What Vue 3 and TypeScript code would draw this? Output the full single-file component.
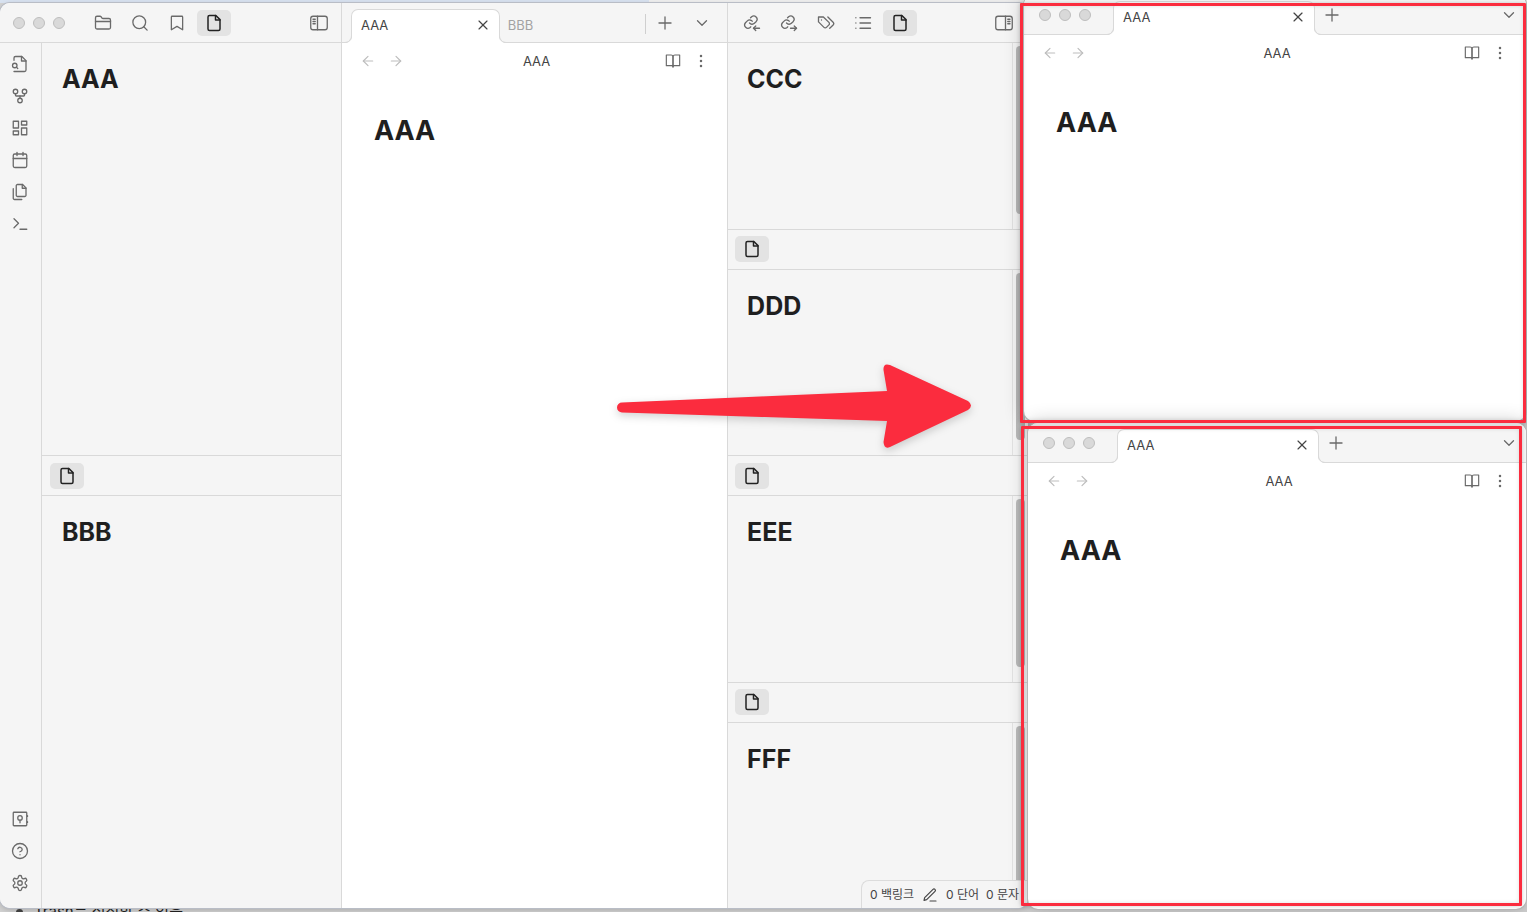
<script setup lang="ts">
import { h, ref } from 'vue'

const icons: Record<string, string[]> = {
  folder: [
    'M20 20a2 2 0 0 0 2-2V8a2 2 0 0 0-2-2h-7.9a2 2 0 0 1-1.69-.9L9.6 3.9A2 2 0 0 0 7.93 3H4a2 2 0 0 0-2 2v13a2 2 0 0 0 2 2Z',
    'M2 10h20',
  ],
  search: ['M19.5 11a8.5 8.5 0 1 1-17 0 8.5 8.5 0 0 1 17 0Z', 'M21.5 21.5 17 17'],
  bookmark: ['m19.5 21-7.5-4.5L4.500 21V4a1 1 0 0 1 1-1h13a1 1 0 0 1 1 1v17z'],
  file: ['M14.5 2H6a2 2 0 0 0-2 2v16a2 2 0 0 0 2 2h12a2 2 0 0 0 2-2V7.500L14.500 2z', 'M14 2v6h6'],
  panelLeft: ['M4 3h16a3 3 0 0 1 3 3v12a3 3 0 0 1-3 3H4a3 3 0 0 1-3-3V6a3 3 0 0 1 3-3Z', 'M10 3v18', 'M4 7h3M4 10h3M4 13h3'],
  panelRight: ['M4 3h16a3 3 0 0 1 3 3v12a3 3 0 0 1-3 3H4a3 3 0 0 1-3-3V6a3 3 0 0 1 3-3Z', 'M14 3v18', 'M17 7h3M17 10h3M17 13h3'],
  fileSearch: [
    'M4 22h14a2 2 0 0 0 2-2V7.500L14.500 2H6a2 2 0 0 0-2 2v3',
    'M14 2v6h6',
    'M5 17a3 3 0 1 0 0-6 3 3 0 0 0 0 6z',
    'm9 18-1.500-1.500',
  ],
  fork: [
    'M15 18a3 3 0 1 1-6 0 3 3 0 0 1 6 0Z',
    'M9 6a3 3 0 1 1-6 0 3 3 0 0 1 6 0Z',
    'M21 6a3 3 0 1 1-6 0 3 3 0 0 1 6 0Z',
    'M18 9v2c0 .6-.4 1-1 1H7c-.6 0-1-.4-1-1V9',
    'M12 12v3',
  ],
  dashboard: ['M3 3h7v9H3z', 'M14 3h7v5h-7z', 'M14 12h7v9h-7z', 'M3 16h7v5H3z'],
  calendar: ['M5 4h14a2 2 0 0 1 2 2v14a2 2 0 0 1-2 2H5a2 2 0 0 1-2-2V6a2 2 0 0 1 2-2Z', 'M16 2v4', 'M8 2v4', 'M3 10h18'],
  files: [
    'M15.500 2H8.600c-.4 0-.8.2-1.100.5-.3.3-.5.7-.5 1.100v12.800c0 .4.2.8.5 1.100.3.3.7.5 1.100.5h9.800c.4 0 .8-.2 1.100-.5.3-.3.5-.7.5-1.100V6.500L15.500 2z',
    'M3 7.600v12.800c0 .4.2.8.5 1.100.3.3.7.5 1.100.5h9.800',
    'M15 2v5h5',
  ],
  terminal: ['m4 17 6-6-6-6', 'M12 19h9'],
  vault: [
    'M4 3h16a1 1 0 0 1 1 1v16a1 1 0 0 1-1 1H4a1 1 0 0 1-1-1V4a1 1 0 0 1 1-1Z',
    'M15 10.500a3 3 0 1 1-6 0 3 3 0 0 1 6 0Z',
    'M12 13.500V17',
    'M22 7.500v1M22 15.500v1',
  ],
  help: ['M22 12a10 10 0 1 1-20 0 10 10 0 0 1 20 0Z', 'M9.090 9a3 3 0 0 1 5.830 1c0 2-3 3-3 3', 'M12 17h.01'],
  settings: [
    'M12.220 2h-.44a2 2 0 0 0-2 2v.18a2 2 0 0 1-1 1.730l-.43.25a2 2 0 0 1-2 0l-.15-.08a2 2 0 0 0-2.730.73l-.22.38a2 2 0 0 0 .73 2.730l.15.1a2 2 0 0 1 1 1.720v.51a2 2 0 0 1-1 1.740l-.15.09a2 2 0 0 0-.73 2.730l.22.38a2 2 0 0 0 2.730.73l.15-.08a2 2 0 0 1 2 0l.43.25a2 2 0 0 1 1 1.730V20a2 2 0 0 0 2 2h.44a2 2 0 0 0 2-2v-.18a2 2 0 0 1 1-1.730l.43-.25a2 2 0 0 1 2 0l.15.08a2 2 0 0 0 2.730-.73l.22-.39a2 2 0 0 0-.73-2.730l-.15-.08a2 2 0 0 1-1-1.740v-.5a2 2 0 0 1 1-1.740l.15-.09a2 2 0 0 0 .73-2.730l-.22-.38a2 2 0 0 0-2.730-.73l-.15.08a2 2 0 0 1-2 0l-.43-.25a2 2 0 0 1-1-1.730V4a2 2 0 0 0-2-2z',
    'M15 12a3 3 0 1 1-6 0 3 3 0 0 1 6 0Z',
  ],
  linkIn: [
    'M8.700 12a4.400 4.400 0 0 0 6.500.4l2.500-2.500a4.400 4.400 0 0 0-6.200-6.200l-1.400 1.400',
    'M12.300 9.600a4.400 4.400 0 0 0-6.500-.4l-2.500 2.500a4.400 4.400 0 0 0 6.200 6.200l.8-.8',
    'M22 19h-8',
    'm17 16-3 3 3 3',
  ],
  linkOut: [
    'M8.700 12a4.400 4.400 0 0 0 6.500.4l2.500-2.500a4.400 4.400 0 0 0-6.200-6.200l-1.400 1.400',
    'M12.300 9.600a4.400 4.400 0 0 0-6.500-.4l-2.500 2.500a4.400 4.400 0 0 0 6.200 6.200l.8-.8',
    'M14 19h8',
    'm19 16 3 3-3 3',
  ],
  tags: [
    'M8.500 4H2v6.500l7.300 7.300c.9.9 2.400.9 3.300 0l3.300-3.300c.9-.9.9-2.400 0-3.300L8.500 4Z',
    'M6 8v.01',
    'm14.500 4 7 7a2.600 2.600 0 0 1 0 3.600L17 19',
  ],
  list: ['M8 5h14', 'M8 12h14', 'M8 19h14', 'M2.500 5h.01', 'M2.500 12h.01', 'M2.500 19h.01'],
  close: ['M18 6 6 18', 'm6 6 12 12'],
  plus: ['M12 4v16', 'M4 12h16'],
  chevron: ['m6 9 6 6 6-6'],
  back: ['m12 19-7-7 7-7', 'M19 12H5'],
  forward: ['M5 12h14', 'm12 5 7 7-7 7'],
  book: ['M2 3h7a3 3 0 0 1 3 3v15a2 2 0 0 0-2-2H2z', 'M22 3h-7a3 3 0 0 0-3 3v15a2 2 0 0 1 2-2h8z'],
  more: [
    'M13 12a1 1 0 1 1-2 0 1 1 0 0 1 2 0Z',
    'M13 4.500a1 1 0 1 1-2 0 1 1 0 0 1 2 0Z',
    'M13 19.500a1 1 0 1 1-2 0 1 1 0 0 1 2 0Z',
  ],
  pen: ['M12 21h9', 'M16.500 3.500a2.120 2.120 0 0 1 3 3L7 19l-4 1 1-4Z'],
}

const Icon = (props: { name: string }) =>
  h('svg', { class: 'icon', viewBox: '0 0 24 24', 'aria-hidden': 'true' }, icons[props.name].map((d) => h('path', { d })))
Icon.props = ['name']

interface Action {
  icon: string
  label: string
}

const leftActions: Action[] = [
  { icon: 'folder', label: 'Files' },
  { icon: 'search', label: 'Search' },
  { icon: 'bookmark', label: 'Bookmarks' },
  { icon: 'file', label: 'AAA' },
]
const rightActions: Action[] = [
  { icon: 'linkIn', label: 'Backlinks' },
  { icon: 'linkOut', label: 'Outgoing links' },
  { icon: 'tags', label: 'Tags' },
  { icon: 'list', label: 'Outline' },
  { icon: 'file', label: 'CCC' },
]
const ribbonTop: Action[] = [
  { icon: 'fileSearch', label: 'Quick switcher' },
  { icon: 'fork', label: 'Graph view' },
  { icon: 'dashboard', label: 'Canvas' },
  { icon: 'calendar', label: 'Daily note' },
  { icon: 'files', label: 'Templates' },
  { icon: 'terminal', label: 'Command palette' },
]
const ribbonBottom: Action[] = [
  { icon: 'vault', label: 'Open vault' },
  { icon: 'help', label: 'Help' },
  { icon: 'settings', label: 'Settings' },
]

const leftPanes = ref<string[]>(['AAA', 'BBB'])
const rightPanes = ref<string[]>(['CCC', 'DDD', 'EEE', 'FFF'])
const popouts = [
  { id: 'upper', title: 'AAA' },
  { id: 'lower', title: 'AAA' },
]
const controls = ['Close', 'Minimize', 'Zoom']
</script>

<template>
  <div class="desktop">
    <div class="backdrop-top"><span class="backdrop-blue"></span></div>
    <p class="backdrop-note"><span class="bullet"></span>Trash는 설정할 수 있음</p>

    <main class="window main-window">
      <section class="dock dock-left">
        <nav class="ribbon">
          <div class="ribbon-head">
            <div class="lights">
              <button v-for="c in controls" :key="c" class="light" :aria-label="c"></button>
            </div>
          </div>
          <div class="ribbon-body">
            <button v-for="a in ribbonTop" :key="a.icon" class="ribbon-button" :aria-label="a.label">
              <Icon :name="a.icon" />
            </button>
            <span class="spacer"></span>
            <button v-for="a in ribbonBottom" :key="a.icon" class="ribbon-button" :aria-label="a.label">
              <Icon :name="a.icon" />
            </button>
          </div>
        </nav>
        <div class="panes">
          <article v-for="(pane, i) in leftPanes" :key="pane" class="pane">
            <header class="pane-head" :class="{ 'with-lights': i === 0 }">
              <template v-if="i === 0">
                <button
                  v-for="a in leftActions"
                  :key="a.icon"
                  class="dock-tab"
                  :class="{ active: a.icon === 'file' }"
                  :aria-label="a.label"
                >
                  <Icon :name="a.icon" />
                </button>
                <span class="spacer"></span>
                <button class="toggle" aria-label="Collapse left sidebar"><Icon name="panelLeft" /></button>
              </template>
              <button v-else class="dock-tab active" :aria-label="pane"><Icon name="file" /></button>
            </header>
            <div class="pane-body">
              <h2>{{ pane }}</h2>
            </div>
          </article>
        </div>
      </section>

      <section class="editor">
        <header class="tab-bar">
          <div class="tab active">
            <button class="tab-name">AAA</button>
            <button class="tab-close" aria-label="Close tab"><Icon name="close" /></button>
          </div>
          <div class="tab idle"><button class="tab-name">BBB</button></div>
          <button class="bar-button" aria-label="New tab"><Icon name="plus" /></button>
          <button class="bar-button" aria-label="Tab list"><Icon name="chevron" /></button>
        </header>
        <div class="view-head">
          <button class="view-button faint" aria-label="Back"><Icon name="back" /></button>
          <button class="view-button faint" aria-label="Forward"><Icon name="forward" /></button>
          <span class="view-title">AAA</span>
          <button class="view-button" aria-label="Reading view"><Icon name="book" /></button>
          <button class="view-button" aria-label="More options"><Icon name="more" /></button>
        </div>
        <h1>AAA</h1>
      </section>

      <section class="dock dock-right">
        <div class="panes">
          <article v-for="(pane, i) in rightPanes" :key="pane" class="pane">
            <header class="pane-head">
              <template v-if="i === 0">
                <button
                  v-for="a in rightActions"
                  :key="a.icon"
                  class="dock-tab"
                  :class="{ active: a.icon === 'file' }"
                  :aria-label="a.label"
                >
                  <Icon :name="a.icon" />
                </button>
                <span class="spacer"></span>
                <button class="toggle" aria-label="Collapse right sidebar"><Icon name="panelRight" /></button>
              </template>
              <button v-else class="dock-tab active" :aria-label="pane"><Icon name="file" /></button>
            </header>
            <div class="pane-body">
              <h2>{{ pane }}</h2>
              <div class="scroll-track"><div class="scroll-thumb"></div></div>
            </div>
          </article>
        </div>
      </section>

      <footer class="status-bar">
        <span>0 백링크</span>
        <button class="status-edit" aria-label="Editing view"><Icon name="pen" /></button>
        <span>0 단어</span>
        <span>0 문자</span>
      </footer>
    </main>

    <section v-for="p in popouts" :key="p.id" class="window popout" :class="p.id">
      <header class="tab-bar">
        <div class="lights">
          <button v-for="c in controls" :key="c" class="light" :aria-label="c"></button>
        </div>
        <div class="tab active">
          <button class="tab-name">{{ p.title }}</button>
          <button class="tab-close" aria-label="Close tab"><Icon name="close" /></button>
        </div>
        <button class="bar-button" aria-label="New tab"><Icon name="plus" /></button>
        <span class="spacer"></span>
        <button class="bar-button" aria-label="Tab list"><Icon name="chevron" /></button>
      </header>
      <div class="view-head">
        <button class="view-button faint" aria-label="Back"><Icon name="back" /></button>
        <button class="view-button faint" aria-label="Forward"><Icon name="forward" /></button>
        <span class="view-title">{{ p.title }}</span>
        <button class="view-button" aria-label="Reading view"><Icon name="book" /></button>
        <button class="view-button" aria-label="More options"><Icon name="more" /></button>
      </div>
      <h1>{{ p.title }}</h1>
    </section>

    <div class="frame frame-upper"></div>
    <div class="frame frame-lower"></div>
    <svg class="arrow" viewBox="610 356 370 104" aria-hidden="true">
      <path
        d="M622 402.500 887 391 883.500 370Q883 362.500 890 365L968 401Q974 405.500 968 410L890 447Q884 449.500 883.500 442L887 421 622 412.500A5 5 0 0 1 622 402.500Z"
      />
    </svg>
  </div>
</template>

<style>
html,
body,
#app {
  height: 100%;
}
body {
  margin: 0;
  overflow: hidden;
}
</style>

<style scoped>
.desktop {
  position: relative;
  height: 100%;
  overflow: hidden;
  background: #d2d2d2;
  color: #222;
  font: 13px/18px Inter, 'Noto Sans CJK KR', sans-serif;
}
.desktop * {
  box-sizing: border-box;
}
button {
  display: flex;
  align-items: center;
  justify-content: center;
  flex: none;
  margin: 0;
  padding: 0;
  border: 0;
  background: none;
  color: #6a6a6a;
  font: inherit;
}
.icon {
  flex: none;
  width: 18px;
  height: 18px;
  fill: none;
  stroke: currentColor;
  stroke-width: 1.75;
  stroke-linecap: round;
  stroke-linejoin: round;
}
.spacer {
  flex: 1;
}
h1,
h2 {
  margin: 0;
  color: #1f1f1f;
  font-weight: 700;
}
h1 {
  padding: 32px 32px 0;
  font-size: 27px;
  line-height: 40px;
}
h2 {
  flex: 1;
  padding: 20px 20px 0;
  font-size: 25px;
  line-height: 32px;
}

.backdrop-top {
  height: 3px;
  background: #efefef;
}
.backdrop-blue {
  display: block;
  width: 42.5%;
  height: 3px;
  background: #d8e2f0;
}
.backdrop-note {
  position: absolute;
  bottom: -10px;
  left: 16px;
  display: flex;
  align-items: center;
  gap: 11px;
  margin: 0;
  font-size: 15px;
  line-height: 20px;
}
.bullet {
  width: 7px;
  height: 7px;
  border-radius: 50%;
  background: #444;
}

.window {
  position: absolute;
  overflow: hidden;
  background: #fff;
}
.main-window {
  top: 3px;
  bottom: 4px;
  left: 0;
  display: flex;
  width: calc(67% + 5px);
  border-radius: 10px;
  box-shadow: 0 0 0 1px #b9bdc6, 0 2px 6px rgba(0, 0, 0, 0.2);
}
.popout {
  right: 1px;
  border-radius: 10px;
  box-shadow: 0 0 0 1px #b8b8b8, 0 0 20px rgba(0, 0, 0, 0.24);
}
.upper {
  top: -5px;
  bottom: calc(50% + 35px);
  left: calc(67% + 1px);
}
.lower {
  top: calc(50% - 33px);
  bottom: 3px;
  left: calc(67% + 5px);
}

.dock {
  display: flex;
  flex: none;
  background: #f5f5f5;
}
.dock-left {
  width: 342px;
  border-right: 1px solid #d9d9d9;
}
.dock-right {
  width: 301px;
  border-left: 1px solid #d9d9d9;
}
.ribbon {
  display: flex;
  flex-direction: column;
  width: 42px;
}
.ribbon-head {
  display: flex;
  flex: none;
  height: 40px;
  border-bottom: 1px solid #d9d9d9;
}
.ribbon-body {
  display: flex;
  flex: 1;
  flex-direction: column;
  align-items: center;
  gap: 4px;
  padding: 7px 2px 11px 0;
  border-right: 1px solid #d9d9d9;
}
.ribbon-button {
  width: 28px;
  height: 28px;
}
.lights {
  display: flex;
  flex: none;
  align-items: center;
  gap: 8px;
  padding-left: 13px;
}
.light {
  width: 12px;
  height: 12px;
  border: 1px solid #bebebe;
  border-radius: 50%;
  background: #d9d9d9;
}
.panes {
  display: flex;
  flex: 1;
  flex-direction: column;
  min-width: 0;
}
.pane {
  display: flex;
  flex: 1;
  flex-direction: column;
  min-height: 0;
  border-bottom: 1px solid #d9d9d9;
}
.pane:last-child {
  border-bottom: 0;
}
.pane-head {
  display: flex;
  flex: none;
  align-items: center;
  gap: 3px;
  height: 40px;
  padding: 0 15px 0 7px;
  border-bottom: 1px solid #d9d9d9;
}
.dock-left .pane-head {
  padding: 0 13px 0 8px;
}
.dock-left .with-lights {
  padding-left: 44px;
}
.dock-tab {
  width: 34px;
  height: 26px;
  border-radius: 5px;
}
.dock-tab.active {
  background: #e3e3e3;
  color: #222;
}
.dock-tab.active .icon {
  stroke-width: 2;
}
.pane-body {
  display: flex;
  flex: 1;
  min-height: 0;
}
.dock-right .pane-body h2 {
  padding-left: 19px;
}
.scroll-track {
  width: 16px;
  padding: 3px 3px 0;
  border-left: 1px solid #e2e2e2;
}
.scroll-thumb {
  height: 92%;
  border-radius: 4px;
  background: #b9b9b9;
}

.editor {
  flex: 1;
  min-width: 0;
}
.tab-bar {
  display: flex;
  align-items: center;
  height: 40px;
  border-bottom: 1px solid #d9d9d9;
  background: #f5f5f5;
}
.editor .tab-bar {
  padding: 0 7px 0 9px;
}
.tab {
  position: relative;
  display: flex;
  align-items: center;
  align-self: flex-end;
  justify-content: space-between;
  height: 33px;
  padding-bottom: 2px;
}
.tab.active {
  height: 34px;
  margin-bottom: -1px;
  padding: 0 7px 3px 9px;
  border: 1px solid #d9d9d9;
  border-bottom: 0;
  border-radius: 7px 7px 0 0;
  background: #fff;
}
.tab.active::before,
.tab.active::after {
  position: absolute;
  bottom: 0;
  width: 7px;
  height: 7px;
  border: solid #d9d9d9;
  content: '';
}
.tab.active::before {
  right: 100%;
  border-width: 0 1px 1px 0;
  border-radius: 0 0 7px 0;
  box-shadow: 3px 3px 0 #fff;
  clip-path: inset(0 -1px 0 0);
}
.tab.active::after {
  left: 100%;
  border-width: 0 0 1px 1px;
  border-radius: 0 0 0 7px;
  box-shadow: -3px 3px 0 #fff;
  clip-path: inset(0 0 0 -1px);
}
.editor .tab {
  flex: 1 1 50%;
}
.tab.idle {
  padding-left: 8px;
}
.tab.idle::after {
  position: absolute;
  top: 5px;
  right: 0;
  width: 1px;
  height: 20px;
  background: #cfcfcf;
  content: '';
}
.tab-name {
  color: #444;
}
.idle .tab-name {
  color: #a3a3a3;
}
.tab-close {
  width: 18px;
  height: 18px;
  color: #444;
}
.tab-close .icon,
.view-button .icon {
  width: 16px;
  height: 16px;
}
.bar-button {
  width: 37px;
  height: 28px;
}
.popout .tab-bar .lights {
  width: 89px;
  padding-left: 15px;
}
.popout .tab {
  width: 202px;
}
.popout .bar-button {
  width: 34px;
}
.view-head {
  display: flex;
  align-items: center;
  height: 36px;
  padding: 0 12px;
}
.view-button {
  width: 28px;
  height: 26px;
}
.view-button.faint {
  color: #bdbdbd;
}
.view-title {
  flex: 1;
  padding-left: 4px;
  color: #444;
  text-align: center;
}

.status-bar {
  position: absolute;
  right: 0;
  bottom: 0;
  display: flex;
  align-items: center;
  gap: 7px;
  height: 28px;
  padding: 0 9px 0 8px;
  border: 1px solid #dcdcdc;
  border-width: 1px 0 0 1px;
  border-radius: 8px 0 0 0;
  background: #f5f5f5;
  color: #444;
  font-size: 12px;
}
.status-edit {
  width: 18px;
  height: 18px;
  color: #444;
}
.status-edit .icon {
  width: 16px;
  height: 16px;
}

.frame {
  position: absolute;
  border: 3px solid #fb2c3e;
  border-radius: 1px;
  box-shadow: 0 0 4px rgba(0, 0, 0, 0.2), inset 0 0 4px rgba(0, 0, 0, 0.12);
  pointer-events: none;
}
.frame-upper {
  top: 3px;
  right: 1px;
  bottom: calc(50% + 33px);
  left: calc(67% - 3px);
}
.frame-lower {
  top: calc(50% - 30px);
  right: 5px;
  bottom: 6px;
  left: calc(67% - 2px);
}
.arrow {
  position: absolute;
  top: 356px;
  right: 547px;
  width: 370px;
  height: 104px;
  fill: #fb2c3e;
  filter: drop-shadow(0 3px 4px rgba(0, 0, 0, 0.18));
  pointer-events: none;
}
</style>
